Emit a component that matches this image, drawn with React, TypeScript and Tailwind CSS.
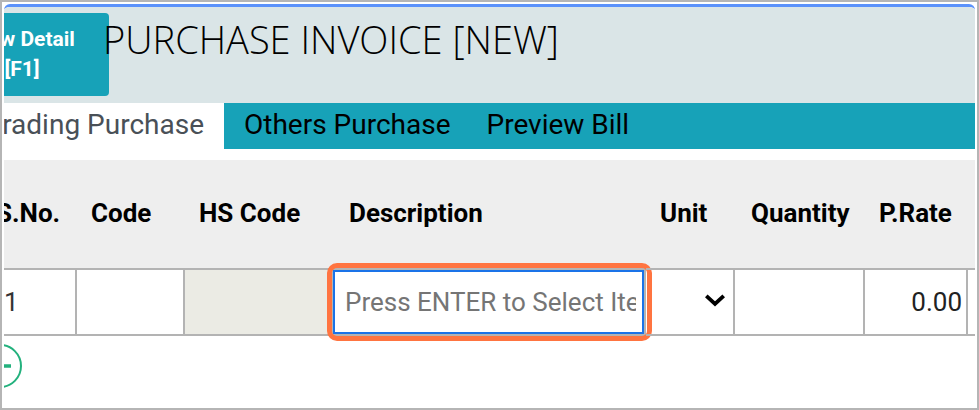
const tabs = ['Trading Purchase', 'Others Purchase', 'Preview Bill'];

const cell = 'h-[68px] border-y-2 border-r-2 border-[#b3b3b3] p-0';
const heading = 'h-[108px] p-0 pb-0.5 text-left align-middle text-[26px] leading-8 font-bold';
const field = 'block h-16 w-full bg-transparent text-[26px] outline-none';

function TabBar() {
  return (
    <nav className="flex h-[46px] bg-[#17a2b8] text-[28px] leading-8" role="tablist">
      {tabs.map((tab, index) => (
        <button
          key={tab}
          type="button"
          role="tab"
          aria-selected={index === 0}
          className={
            index === 0
              ? 'flex w-[220px] items-center justify-end overflow-hidden bg-white pr-5 pb-0.5 whitespace-nowrap text-[#495057]'
              : 'flex items-center pr-4 pl-5 pb-0.5 whitespace-nowrap text-black'
          }
        >
          {tab}
        </button>
      ))}
    </nav>
  );
}

function ItemTable() {
  return (
    <table className="-ml-3 w-[calc(100%+12px)] table-fixed border-separate border-spacing-0">
      <colgroup>
        <col className="w-[85px]" />
        <col className="w-[108px]" />
        <col className="w-[148px]" />
        <col />
        <col className="w-[89px]" />
        <col className="w-[130px]" />
        <col className="w-[103px]" />
        <col className="w-[7px]" />
      </colgroup>
      <thead className="bg-[#eeeeee]">
        <tr>
          <th className={`${heading} pl-1`}>S.No.</th>
          <th className={`${heading} pl-3.5`}>Code</th>
          <th className={`${heading} pl-3.5`}>HS Code</th>
          <th className={`${heading} pl-4`}>Description</th>
          <th className={`${heading} pl-3.5`}>Unit</th>
          <th className={`${heading} pl-4`}>Quantity</th>
          <th className={`${heading} pl-3.5`}>P.Rate</th>
          <th className={heading}></th>
        </tr>
      </thead>
      <tbody>
        <tr>
          <td className={`${cell} pl-3 text-[26px] text-[#333]`}>1</td>
          <td className={cell}>
            <input aria-label="Code" className={`${field} px-3`} />
          </td>
          <td className={`${cell} bg-[#ebebe4]`}>
            <input aria-label="HS Code" disabled className={`${field} px-3`} />
          </td>
          <td className={`${cell} relative`}>
            <input
              aria-label="Description"
              placeholder="Press ENTER to Select Item"
              className="block h-16 w-full border-2 border-[#1a73e8] bg-white pr-1.5 pl-2.5 text-[26px] outline-none placeholder:text-[#757575]"
            />
            <span className="pointer-events-none absolute -inset-y-[7px] -right-2 -left-1.5 rounded-[10px] border-5 border-[#ff7440]" />
          </td>
          <td className={`${cell} relative`}>
            <select aria-label="Unit" className={`${field} appearance-none pl-3`}>
              <option></option>
            </select>
            <svg
              viewBox="0 0 20 13"
              className="pointer-events-none absolute top-6 right-2 h-[13px] w-5"
              fill="none"
              stroke="#000"
              strokeWidth="3.8"
            >
              <path d="M1.3 1.8 10 10 18.7 1.8" />
            </svg>
          </td>
          <td className={cell}>
            <input aria-label="Quantity" className={`${field} px-3`} />
          </td>
          <td className={cell}>
            <input
              aria-label="Purchase rate"
              defaultValue="0.00"
              className={`${field} pr-1 text-right text-[#222]`}
            />
          </td>
          <td className="h-[68px] border-y-2 border-[#b3b3b3] p-0"></td>
        </tr>
      </tbody>
    </table>
  );
}

export default function App() {
  return (
    <div className="min-h-screen border-2 border-[#b5b5b5] bg-white p-0.5 font-[Roboto,'Liberation_Sans',sans-serif] text-black">
      <main className="overflow-hidden rounded-t-md border-t-3 border-[#5b92fb]">
        <header className="flex h-24 items-start bg-[#dae5e7] pt-1.5">
          <button
            type="button"
            className="-ml-[69px] h-[83px] w-[174px] shrink-0 rounded-sm bg-[#17a2b8] pb-0.5 text-center text-[21px] leading-[30px] font-bold text-white"
          >
            View Detail
            <br />
            [F1]
          </button>
          <h1 className="-ml-1.5 font-['Open_Sans','Noto_Sans',sans-serif] text-[38px] leading-[52px] font-light whitespace-nowrap">
            PURCHASE INVOICE [NEW]
          </h1>
        </header>
        <TabBar />
        <section className="mt-[11px]">
          <ItemTable />
          <button
            type="button"
            aria-label="Add row"
            className="mt-2 -ml-[26px] block h-11 w-11 text-[#23b17d]"
          >
            <svg viewBox="0 0 44 44" fill="none" stroke="currentColor">
              <circle cx="22" cy="22" r="21" strokeWidth="2" />
              <path d="M11 22h22M22 11v22" strokeWidth="3.4" />
            </svg>
          </button>
        </section>
      </main>
    </div>
  );
}
